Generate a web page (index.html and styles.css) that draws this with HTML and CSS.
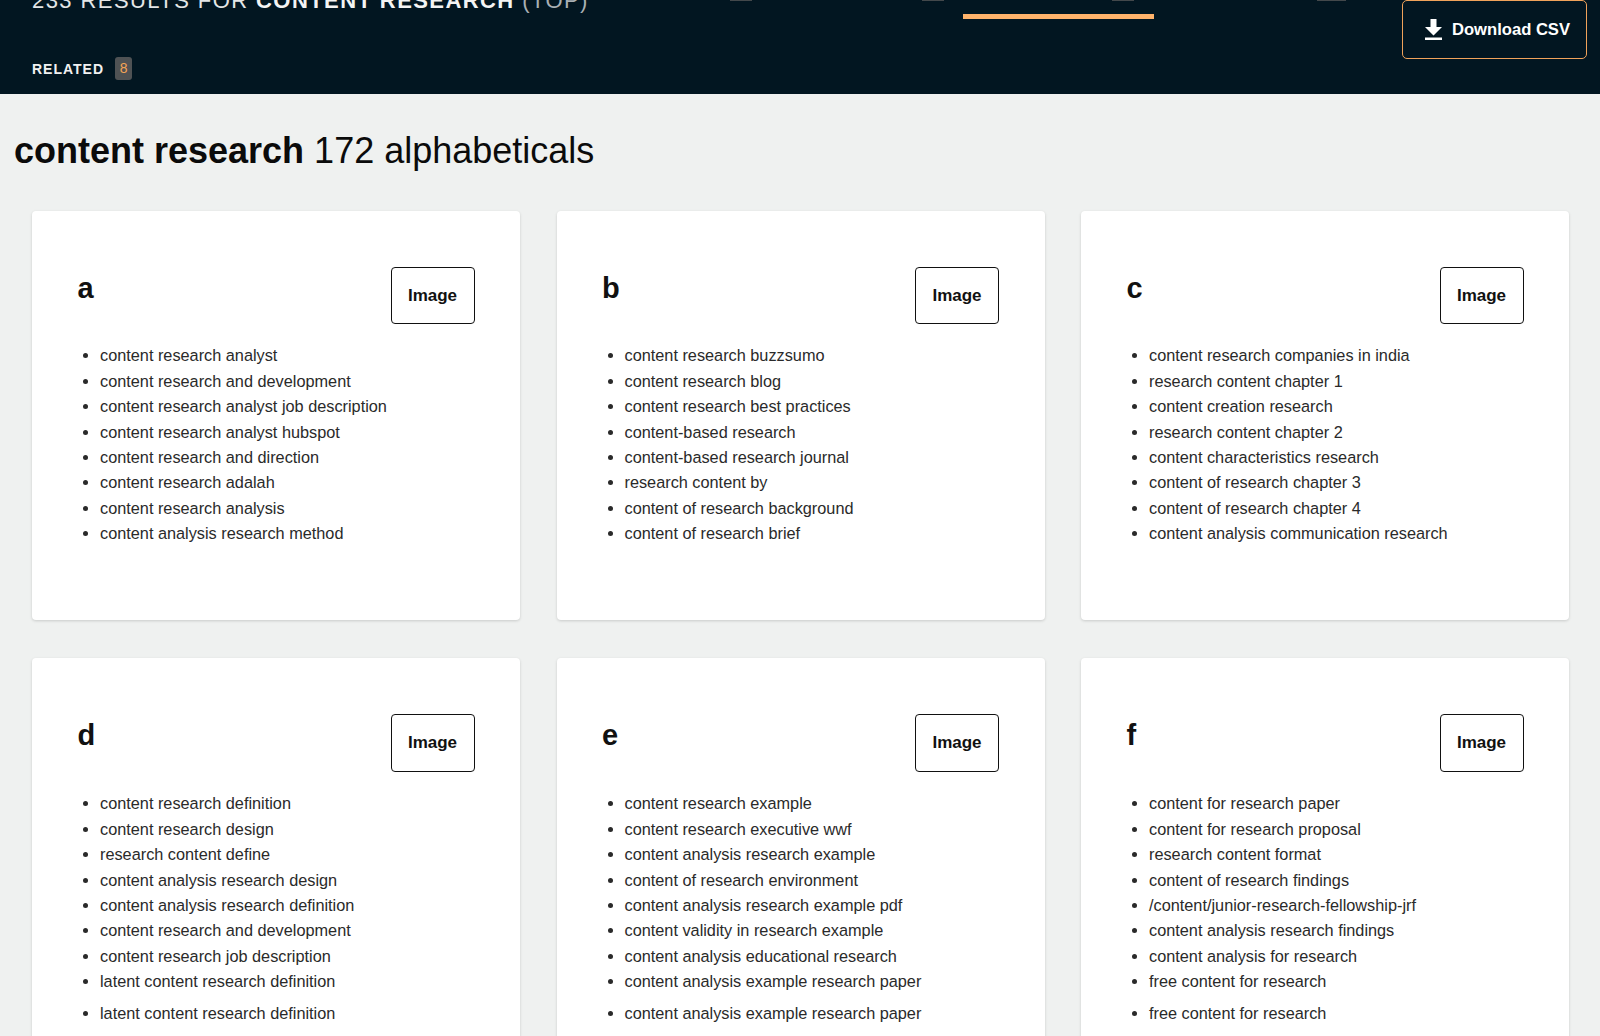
FILE: index.html
```html
<!DOCTYPE html>
<html lang="en">
<head>
<meta charset="UTF-8">
<meta name="viewport" content="width=device-width, initial-scale=1.0">
<title>content research alphabeticals</title>
<link rel="stylesheet" href="styles.css">
</head>
<body>
  <!-- Dark results bar, scrolled so its top edge is cut off -->
  <header class="topbar">
    <h2 class="results-title">233 RESULTS FOR <b>CONTENT RESEARCH</b> <span class="muted">(TOP)</span></h2>
    <div class="tab-tips">
      <span class="tip"></span>
      <span class="tip"></span>
      <span class="tip"></span>
      <span class="tip"></span>
    </div>
    <div class="tab-line"></div>
    <a class="csv-button">
      <svg class="csv-icon" viewBox="0 0 17 21" width="17" height="21"><path d="M5.5 0h6v8h5.5l-8.500 8.500L0 8h5.500z" fill="#fff"/><rect x="0" y="18.500" width="17" height="2.500" fill="#fff"/></svg>
      Download CSV
    </a>
    <div class="related">RELATED <span class="related-count">8</span></div>
  </header>

  <h1 class="page-title"><b>content research</b> 172 alphabeticals</h1>

  <main class="card-grid">
    <section class="card">
      <div class="card-head"><h3>a</h3><a class="image-button">Image</a></div>
      <ul>
        <li>content research analyst</li>
        <li>content research and development</li>
        <li>content research analyst job description</li>
        <li>content research analyst hubspot</li>
        <li>content research and direction</li>
        <li>content research adalah</li>
        <li>content research analysis</li>
        <li>content analysis research method</li>
      </ul>
    </section>
    <section class="card">
      <div class="card-head"><h3>b</h3><a class="image-button">Image</a></div>
      <ul>
        <li>content research buzzsumo</li>
        <li>content research blog</li>
        <li>content research best practices</li>
        <li>content-based research</li>
        <li>content-based research journal</li>
        <li>research content by</li>
        <li>content of research background</li>
        <li>content of research brief</li>
      </ul>
    </section>
    <section class="card">
      <div class="card-head"><h3>c</h3><a class="image-button">Image</a></div>
      <ul>
        <li>content research companies in india</li>
        <li>research content chapter 1</li>
        <li>content creation research</li>
        <li>research content chapter 2</li>
        <li>content characteristics research</li>
        <li>content of research chapter 3</li>
        <li>content of research chapter 4</li>
        <li>content analysis communication research</li>
      </ul>
    </section>
    <section class="card">
      <div class="card-head"><h3>d</h3><a class="image-button">Image</a></div>
      <ul>
        <li>content research definition</li>
        <li>content research design</li>
        <li>research content define</li>
        <li>content analysis research design</li>
        <li>content analysis research definition</li>
        <li>content research and development</li>
        <li>content research job description</li>
        <li>latent content research definition</li>
        <li class="repeat">latent content research definition</li>
      </ul>
    </section>
    <section class="card">
      <div class="card-head"><h3>e</h3><a class="image-button">Image</a></div>
      <ul>
        <li>content research example</li>
        <li>content research executive wwf</li>
        <li>content analysis research example</li>
        <li>content of research environment</li>
        <li>content analysis research example pdf</li>
        <li>content validity in research example</li>
        <li>content analysis educational research</li>
        <li>content analysis example research paper</li>
        <li class="repeat">content analysis example research paper</li>
      </ul>
    </section>
    <section class="card">
      <div class="card-head"><h3>f</h3><a class="image-button">Image</a></div>
      <ul>
        <li>content for research paper</li>
        <li>content for research proposal</li>
        <li>research content format</li>
        <li>content of research findings</li>
        <li>/content/junior-research-fellowship-jrf</li>
        <li>content analysis research findings</li>
        <li>content analysis for research</li>
        <li>free content for research</li>
        <li class="repeat">free content for research</li>
      </ul>
    </section>
  </main>
</body>
</html>
```

FILE: styles.css
```css
html, body {
  height: 100%;
  overflow: hidden;
}

body {
  margin: 0;
  background: #eff1f0;
  color: #111;
  font-family: "Liberation Sans", Arial, sans-serif;
}

/* top bar */
.topbar {
  position: relative;
  height: 94px;
  background: #021621;
  color: #fff;
  overflow: hidden;
}

.results-title {
  position: absolute;
  top: -12px;
  left: 32px;
  margin: 0;
  font-size: 22px;
  font-weight: normal;
  letter-spacing: 1.42px;
  white-space: nowrap;
  color: #e4e6e7;
}

.results-title b {
  color: #f4f4f4;
}

.muted {
  color: #a9b0b4;
}

.tab-tips {
  position: absolute;
  top: 0;
  left: 0;
}

.tip {
  position: absolute;
  top: 0;
  width: 22px;
  height: 1px;
  background: #43484b;
}

.tip:nth-child(1) { left: 730px; }
.tip:nth-child(2) { left: 922px; }
.tip:nth-child(3) { left: 1112px; }
.tip:nth-child(4) { left: 1317px; width: 29px; }

.tab-line {
  position: absolute;
  top: 14px;
  left: 963px;
  width: 191px;
  height: 5px;
  background: #ffb36b;
}

.csv-button {
  position: absolute;
  top: 0;
  left: 1402px;
  box-sizing: border-box;
  display: flex;
  align-items: center;
  gap: 10px;
  width: 185px;
  height: 58.5px;
  padding: 1px 0 0 22px;
  border: 1px solid #f0a25a;
  border-radius: 5px;
  font-size: 16.6px;
  font-weight: bold;
}

.related {
  position: absolute;
  top: 57px;
  left: 32px;
  display: flex;
  align-items: center;
  gap: 11px;
  font-size: 14px;
  font-weight: bold;
  letter-spacing: 1px;
  color: #f1f1f1;
}

.related-count {
  box-sizing: border-box;
  width: 17px;
  height: 23px;
  line-height: 23px;
  text-align: center;
  border-radius: 3px;
  background: #4f5254;
  color: #f4a456;
  font-weight: normal;
  letter-spacing: 0;
}

/* page heading */
.page-title {
  margin: 35px 0 0 14px;
  font-size: 36px;
  line-height: 44px;
  font-weight: normal;
  color: #0b0b0b;
}

/* cards */
.card-grid {
  display: grid;
  grid-template-columns: repeat(3, 488px);
  column-gap: 36.5px;
  row-gap: 38px;
  margin-top: 38px;
  padding-left: 32px;
}

.card {
  box-sizing: border-box;
  height: 409px;
  padding: 56px 45.5px 0;
  background: #fff;
  border-radius: 4px;
  box-shadow: 0 1px 3px rgba(0, 0, 0, 0.16);
}

.card-head {
  display: flex;
  justify-content: space-between;
  align-items: flex-start;
}

.card h3 {
  margin: 6px 0 0;
  font-size: 29px;
  line-height: 30px;
  font-weight: bold;
}

.image-button {
  box-sizing: border-box;
  display: flex;
  align-items: center;
  justify-content: center;
  width: 84px;
  height: 57px;
  border: 1px solid #111;
  border-radius: 4px;
  font-size: 17px;
  font-weight: bold;
}

.card:nth-child(n+4) .image-button {
  height: 58px;
}

.card ul {
  margin: 19.4px 0 0;
  padding-left: 22.5px;
  list-style: disc;
}

.card li {
  font-size: 16.3px;
  line-height: 25.4px;
  color: #2a2a2a;
}

.card li.repeat {
  margin-top: 6px;
}
```
